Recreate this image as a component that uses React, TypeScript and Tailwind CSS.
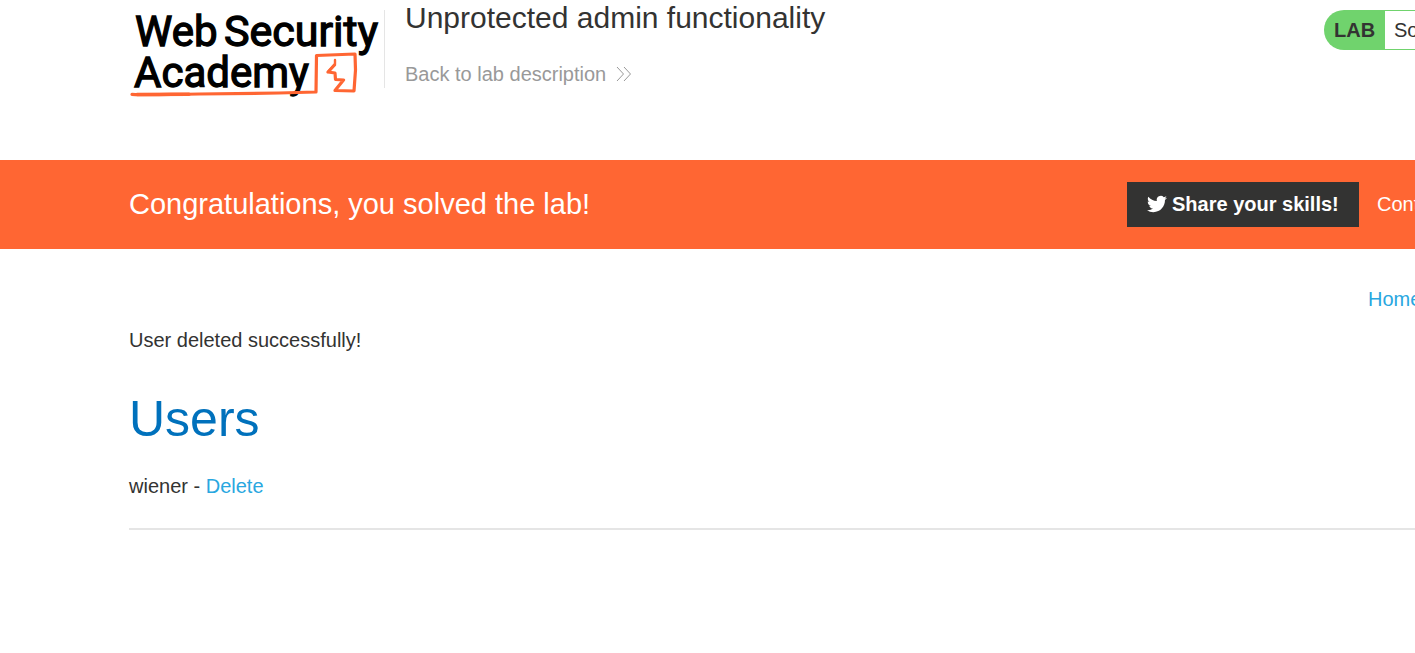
import React from 'react';

function AcademyLogo() {
  return (
    <svg viewBox="0 0 250 98" className="h-[98px] w-[250px] shrink-0" role="img" aria-label="Web Security Academy">
      <g fill="#000" stroke="#000" strokeWidth="1.3" fontFamily='Roboto, "Liberation Sans", sans-serif' fontWeight="400" fontSize="42">
        <text x="6" y="45.500">Web</text>
        <text x="95" y="45.500" fontSize="43">Security</text>
        <text x="5" y="87">Academy</text>
      </g>
      <g fill="none" stroke="#ff6633" strokeLinejoin="round" strokeLinecap="round">
        <path d="M3 94.300 C20 95.300 40 94.200 70 94 L150 93 L187 92 L187.500 55.500 L226 54 L226.500 70 L225 91 L206 90.500 L214.500 80 L206.500 79.500 L206 73 L199 72 L205.500 65" strokeWidth="3.200" />
        <path d="M206 60 L206 64 L199 72" strokeWidth="2.400" />
        <path d="M8 94.500 L60 94.200" strokeWidth="3.400" />
      </g>
    </svg>
  );
}

function DoubleChevron() {
  return (
    <svg viewBox="0 0 16 16" className="h-4 w-4" fill="none" stroke="#999" strokeWidth="1" aria-hidden="true">
      <path d="M1 1 L7.500 8 L1 15 M8 1 L14.500 8 L8 15" />
    </svg>
  );
}

function Bird() {
  return (
    <svg viewBox="0 0 24 24" className="h-5 w-5" fill="#fff" aria-hidden="true">
      <path d="M23.953 4.570a10 10 0 01-2.825.775 4.958 4.958 0 002.163-2.723c-.951.555-2.005.959-3.127 1.184a4.920 4.920 0 00-8.384 4.482C7.690 8.095 4.067 6.130 1.640 3.162a4.822 4.822 0 00-.666 2.475c0 1.710.870 3.213 2.188 4.096a4.904 4.904 0 01-2.228-.616v.060a4.923 4.923 0 003.946 4.827 4.996 4.996 0 01-2.212.085 4.936 4.936 0 004.604 3.417 9.867 9.867 0 01-6.102 2.105c-.390 0-.779-.023-1.170-.067a13.995 13.995 0 007.557 2.209c9.053 0 13.998-7.496 13.998-13.985 0-.210 0-.420-.015-.630A9.935 9.935 0 0024 4.590z" />
    </svg>
  );
}

export default function App() {
  return (
    <div className="min-h-screen overflow-x-hidden bg-white font-['Liberation_Sans',Arial,sans-serif] text-xl leading-6 text-[#333332]">
      <header className="flex h-40 items-start pl-[129px]">
        <AcademyLogo />
        <div className="mt-[10px] ml-[5px] h-[78px] w-px shrink-0 bg-[#e5e5e5]" />
        <div className="ml-5 whitespace-nowrap">
          <h1 className="text-[30px] leading-9">Unprotected admin functionality</h1>
          <a href="#lab" className="mt-[26px] flex items-center gap-[10px] text-[#999]">
            Back to lab description
            <DoubleChevron />
          </a>
        </div>
        <div className="mt-[10px] ml-auto w-[91px] shrink-0">
          <div className="flex h-10 w-[150px] overflow-hidden rounded-full bg-[#70d36d] whitespace-nowrap">
            <span className="flex w-[61px] shrink-0 items-center pl-[10px] font-bold">LAB</span>
            <span className="my-px mr-px flex grow items-center rounded-r-full bg-white pl-[9px]">Solved</span>
          </div>
        </div>
      </header>

      <section className="flex h-[89px] items-center bg-[#ff6633] pb-px pl-[129px] whitespace-nowrap text-white">
        <h2 className="text-[29px] leading-9">Congratulations, you solved the lab!</h2>
        <button type="button" className="ml-auto flex h-[45px] w-[232px] shrink-0 items-center gap-[5px] bg-[#333332] pb-px pl-5 font-bold">
          <Bird />
          Share your skills!
        </button>
        <a href="#learn" className="ml-[18px] w-[38px] shrink-0">Continue learning</a>
      </section>

      <main className="pl-[129px]">
        <nav className="flex justify-end pt-[38px]">
          <a href="#home" className="w-[47px] whitespace-nowrap text-[#29a7df]">Home</a>
        </nav>
        <p className="mt-[17px]">User deleted successfully!</p>
        <h1 className="mt-[37px] text-[50px] leading-[60px] text-[#0071bc]">Users</h1>
        <p className="mt-[25px]">
          wiener - <a href="#delete" className="text-[#29a7df]">Delete</a>
        </p>
        <hr className="mt-[30px] border-t-2 border-[#e5e5e5]" />
      </main>
    </div>
  );
}
